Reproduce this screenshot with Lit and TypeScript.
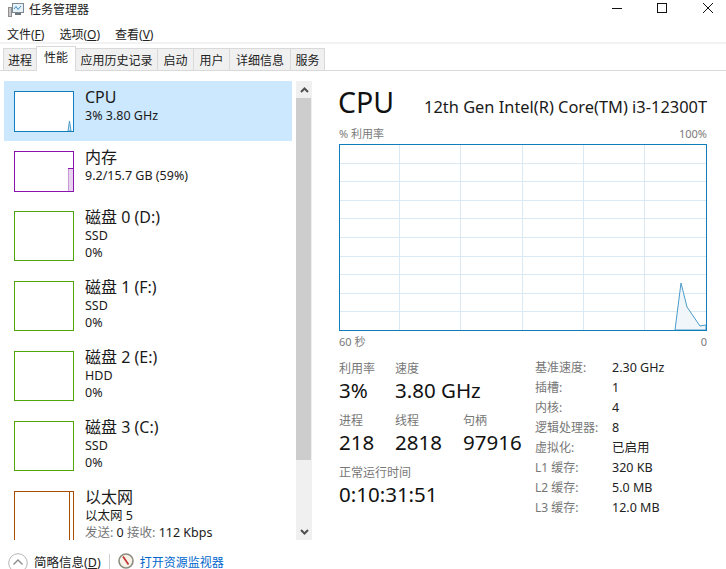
import { LitElement, html, css, svg } from "lit";
import { customElement } from "lit/decorators.js";

const tabs = ["进程", "性能", "应用历史记录", "启动", "用户", "详细信息", "服务"];

const items = [
  { name: "CPU", lines: ["3%  3.80 GHz"], color: "#117dbb", kind: "cpu" },
  { name: "内存", lines: ["9.2/15.7 GB (59%)"], color: "#8b12ae", kind: "mem" },
  { name: "磁盘 0 (D:)", lines: ["SSD", "0%"], color: "#4da60c", kind: "" },
  { name: "磁盘 1 (F:)", lines: ["SSD", "0%"], color: "#4da60c", kind: "" },
  { name: "磁盘 2 (E:)", lines: ["HDD", "0%"], color: "#4da60c", kind: "" },
  { name: "磁盘 3 (C:)", lines: ["SSD", "0%"], color: "#4da60c", kind: "" },
  { name: "以太网", lines: ["以太网 5"], color: "#a74f01", kind: "net" },
];

const specs = [
  ["基准速度:", "2.30 GHz"],
  ["插槽:", "1"],
  ["内核:", "4"],
  ["逻辑处理器:", "8"],
  ["虚拟化:", "已启用"],
  ["L1 缓存:", "320 KB"],
  ["L2 缓存:", "5.0 MB"],
  ["L3 缓存:", "12.0 MB"],
];

@customElement("app-root")
export class AppRoot extends LitElement {
  static styles = css`
    :host {
      display: block;
      width: 726px;
      height: 569px;
      overflow: hidden;
      background: #fff;
      color: #1a1a1a;
      font-family: "Noto Sans", "Noto Sans CJK SC", sans-serif;
      font-size: 12px;
    }
    .title {
      height: 24px;
      display: flex;
      align-items: flex-start;
      padding-left: 8px;
      color: #222;
    }
    .title .app-icon {
      display: block;
      margin: 2px 5px 0 0;
    }
    .title .name {
      flex: 1;
      line-height: 18px;
      margin-top: 1px;
    }
    .controls {
      display: flex;
    }
    .controls svg {
      display: block;
      width: 46px;
      height: 16px;
    }
    .menu {
      height: 18px;
      display: flex;
      gap: 15px;
      padding: 1px 0 0 7px;
      box-sizing: border-box;
      align-items: center;
      color: #222;
    }
    .band {
      height: 2px;
      background: #f2f2f2;
    }
    .tabs {
      height: 26px;
      display: flex;
      align-items: flex-end;
      padding-left: 3px;
      border-bottom: 1px solid #d9d9d9;
    }
    .tab {
      height: 22px;
      box-sizing: border-box;
      padding: 0 5.5px;
      display: flex;
      align-items: center;
      justify-content: center;
      background: #f0f0f0;
      border: 1px solid #d9d9d9;
      border-bottom: none;
      margin-left: -1px;
      color: #222;
    }
    .tab:first-child {
      margin-left: 0;
      padding: 0 4px;
    }
    .tab:nth-child(3) {
      padding: 0 4.5px;
    }
    .tab:nth-child(6) {
      padding: 0 6px;
    }
    .tab:nth-child(7) {
      padding: 0 4.5px;
    }
    .tab.on {
      height: 25px;
      margin-bottom: -1px;
      padding: 0 7px 4px;
      background: #fff;
    }
    .main {
      height: 469px;
      display: flex;
    }
    .side {
      width: 288px;
      margin: 10px 0 0 4px;
      overflow: hidden;
    }
    .item {
      height: 70px;
      box-sizing: border-box;
      display: flex;
      padding: 10px 0 0 10px;
    }
    .item.short {
      height: 60px;
    }
    .item.on {
      background: #cce8ff;
    }
    .graph {
      width: 60px;
      height: 50px;
      flex: none;
      display: block;
      box-sizing: border-box;
      background: #fff;
    }
    .short .graph {
      height: 41px;
    }
    .info {
      margin-left: 11px;
      margin-top: -4px;
      line-height: 17px;
      font-size: 12.5px;
      white-space: nowrap;
    }
    .info .n {
      font-size: 16px;
      line-height: 20px;
      color: #1a1a1a;
    }
    .info .dim {
      color: #777;
    }
    .scroll {
      width: 16px;
      margin: 10px 0 0 4px;
      background: #f0f0f0;
      display: flex;
      flex-direction: column;
    }
    .scroll .btn {
      height: 17px;
      display: flex;
      align-items: center;
      justify-content: center;
    }
    .scroll .thumb {
      height: 362px;
      background: #cdcdcd;
      margin-right: 1px;
    }
    .scroll .rest {
      flex: 1;
    }
    .perf {
      flex: 1;
      padding: 10px 19px 0 27px;
      min-width: 0;
    }
    .head {
      display: flex;
      align-items: baseline;
      justify-content: space-between;
      height: 45px;
    }
    .head .big {
      font-size: 28.5px;
      line-height: 42px;
      color: #111;
      margin-left: -1px;
    }
    .head .model {
      font-size: 16.4px;
      color: #1a1a1a;
      white-space: nowrap;
    }
    .axis {
      display: flex;
      justify-content: space-between;
      height: 18px;
      line-height: 15px;
      color: #7a7a7a;
      font-size: 11px;
    }
    .chart {
      display: block;
      width: 368px;
      height: 187px;
    }
    .axis.under {
      margin-top: 3px;
      height: 20px;
    }
    .stats {
      display: flex;
      margin-top: 7px;
    }
    .live {
      display: grid;
      grid-template-columns: 56px 68px auto;
      grid-auto-rows: 52px;
      width: 196px;
      flex: none;
    }
    .live .wide {
      grid-column: 1 / -1;
    }
    .live .k {
      color: #777;
      line-height: 16px;
      height: 16px;
    }
    .live .v {
      font-size: 20.5px;
      line-height: 26px;
      color: #111;
      white-space: nowrap;
    }
    .live .span {
      grid-column: 2 / -1;
    }
    .spec {
      display: grid;
      grid-template-columns: 77px auto;
      grid-auto-rows: 20px;
      line-height: 20px;
      margin-top: -3px;
      white-space: nowrap;
    }
    .spec .k {
      color: #777;
    }
    .spec .v {
      color: #222;
      font-size: 12.5px;
    }
    .foot {
      height: 29px;
      display: flex;
      align-items: flex-start;
      padding: 13px 0 0 8px;
      box-sizing: border-box;
    }
    .foot svg {
      display: block;
      flex: none;
    }
    .foot .less {
      margin: 3px 0 0 6px;
      color: #222;
      line-height: 13px;
      font-size: 12.5px;
    }
    .foot .sep {
      width: 1px;
      height: 16px;
      background: #d0d0d0;
      margin: 1px 8px 0 8px;
    }
    .foot .link {
      margin: 3px 0 0 6px;
      color: #0066cc;
      line-height: 13px;
    }
    u {
      text-decoration: underline;
    }
  `;

  private chart() {
    const w = 368;
    const h = 186;
    const rows = Array.from({ length: 9 }, (_, i) => ((i + 1) * h) / 10);
    const cols = Array.from({ length: 5 }, (_, i) => ((i + 1) * w) / 6 - 1.5);
    return html`<svg class="chart" viewBox="0 0 368 187">
      <rect width="368" height="187" fill="#fff"></rect>
      ${rows.map(
        (y) => svg`<line x1="0" x2="368" y1=${Math.round(y) + 0.5} y2=${Math.round(y) + 0.5} stroke="#d9eaf4"></line>`
      )}
      ${cols.map(
        (x) => svg`<line y1="0" y2="187" x1=${Math.round(x) + 0.5} x2=${Math.round(x) + 0.5} stroke="#d9eaf4"></line>`
      )}
      <path
        d="M336 186 L342 139 L348 163 L361 182 L367 181 V186 Z"
        fill="#f1f6fa"
        stroke="#4a9ccb"
        stroke-width="1"
      ></path>
      <rect x="0.500" y="0.500" width="367" height="186" fill="none" stroke="#117dbb"></rect>
    </svg>`;
  }

  private graph(it: (typeof items)[number], short: boolean) {
    const h = short ? 41 : 50;
    let inner = svg``;
    if (it.kind === "cpu") {
      inner = svg`<path d="M54 40 L55.500 30 L57 40 Z" fill="#d9eaf4" stroke="#4a9ccb"></path>`;
    } else if (it.kind === "mem") {
      inner = svg`<rect x="54" y="17" width="5" height="23" fill="#e7d3ee"></rect>
        <line x1="54.500" x2="54.500" y1="17" y2="40" stroke="#c89ad6"></line>
        <line x1="54" x2="59" y1="17.500" y2="17.500" stroke="#8b12ae"></line>`;
    } else if (it.kind === "net") {
      inner = svg`<line x1="55.500" x2="55.500" y1="0" y2="50" stroke=${it.color}></line>`;
    }
    return html`<svg class="graph" viewBox="0 0 60 ${h}">
      ${inner}
      <rect x="0.500" y="0.500" width="59" height=${h - 1} fill="none" stroke=${it.color}></rect>
    </svg>`;
  }

  render() {
    return html`
      <div class="title">
        <svg class="app-icon" width="16" height="16" viewBox="0 0 16 16">
          <rect x="0.500" y="5.500" width="3" height="9" fill="#c9c9c9" stroke="#8f8f8f"></rect>
          <rect x="4.500" y="1.500" width="11" height="9" fill="#e6f1f8" stroke="#7d8a94"></rect>
          <path d="M6 7 L8 4.500 L10 7.500 L13 4" fill="none" stroke="#3f8fc4"></path>
          <rect x="7" y="11" width="6" height="2" fill="#6f777c"></rect>
        </svg>
        <span class="name">任务管理器</span>
        <div class="controls">
          <svg viewBox="0 0 46 16">
            <line x1="24" x2="34" y1="8.500" y2="8.500" stroke="#111"></line>
          </svg>
          <svg viewBox="0 0 46 16">
            <rect x="23.500" y="3.500" width="9" height="9" fill="none" stroke="#111"></rect>
          </svg>
          <svg viewBox="0 0 46 16">
            <path d="M23 3 L33 13 M33 3 L23 13" stroke="#111" fill="none"></path>
          </svg>
        </div>
      </div>
      <div class="menu">
        <span>文件(<u>F</u>)</span>
        <span>选项(<u>O</u>)</span>
        <span>查看(<u>V</u>)</span>
      </div>
      <div class="band"></div>
      <div class="tabs">
        ${tabs.map((t, i) => html`<div class="tab ${i === 1 ? "on" : ""}">${t}</div>`)}
      </div>
      <div class="main">
        <div class="side">
          ${items.map((it, i) => {
            const short = i < 2;
            return html`<div class="item ${short ? "short" : ""} ${i === 0 ? "on" : ""}">
              ${this.graph(it, short)}
              <div class="info">
                <div class="n">${it.name}</div>
                ${it.lines.map((l) => html`<div>${l}</div>`)}
                ${it.kind === "net"
                  ? html`<div><span class="dim">发送:</span> 0 <span class="dim">接收:</span> 112 Kbps</div>`
                  : ""}
              </div>
            </div>`;
          })}
        </div>
        <div class="scroll">
          <div class="btn">
            <svg width="9" height="6" viewBox="0 0 9 6">
              <path d="M1 5 L4.500 1.500 L8 5" fill="none" stroke="#505050" stroke-width="2"></path>
            </svg>
          </div>
          <div class="thumb"></div>
          <div class="rest"></div>
          <div class="btn">
            <svg width="9" height="6" viewBox="0 0 9 6">
              <path d="M1 1 L4.500 4.500 L8 1" fill="none" stroke="#505050" stroke-width="2"></path>
            </svg>
          </div>
        </div>
        <div class="perf">
          <div class="head">
            <span class="big">CPU</span>
            <span class="model">12th Gen Intel(R) Core(TM) i3-12300T</span>
          </div>
          <div class="axis"><span>% 利用率</span><span>100%</span></div>
          ${this.chart()}
          <div class="axis under"><span>60 秒</span><span>0</span></div>
          <div class="stats">
            <div class="live">
              <div><div class="k">利用率</div><div class="v">3%</div></div>
              <div class="span"><div class="k">速度</div><div class="v">3.80 GHz</div></div>
              <div><div class="k">进程</div><div class="v">218</div></div>
              <div><div class="k">线程</div><div class="v">2818</div></div>
              <div><div class="k">句柄</div><div class="v">97916</div></div>
              <div class="wide"><div class="k">正常运行时间</div><div class="v">0:10:31:51</div></div>
            </div>
            <div class="spec">
              ${specs.map(
                ([k, v]) => html`<span class="k">${k}</span><span class="v">${v}</span>`
              )}
            </div>
          </div>
        </div>
      </div>
      <div class="foot">
        <svg width="20" height="16" viewBox="0 0 20 16">
          <circle cx="10" cy="10" r="9.300" fill="#fff" stroke="#b4b4b4"></circle>
          <path d="M5.500 11.500 L10 7 L14.500 11.500" fill="none" stroke="#8a8a8a" stroke-width="1.300"></path>
        </svg>
        <span class="less">简略信息(<u>D</u>)</span>
        <span class="sep"></span>
        <svg width="16" height="16" viewBox="0 0 16 16">
          <circle cx="8" cy="8" r="7" fill="#f7f3ea" stroke="#8c8c80" stroke-width="1.600"></circle>
          <path d="M5 3.500 L10.500 11.500" stroke="#c4302b" stroke-width="1.600"></path>
        </svg>
        <span class="link">打开资源监视器</span>
      </div>
    `;
  }
}

declare global {
  interface HTMLElementTagNameMap {
    "app-root": AppRoot;
  }
}
